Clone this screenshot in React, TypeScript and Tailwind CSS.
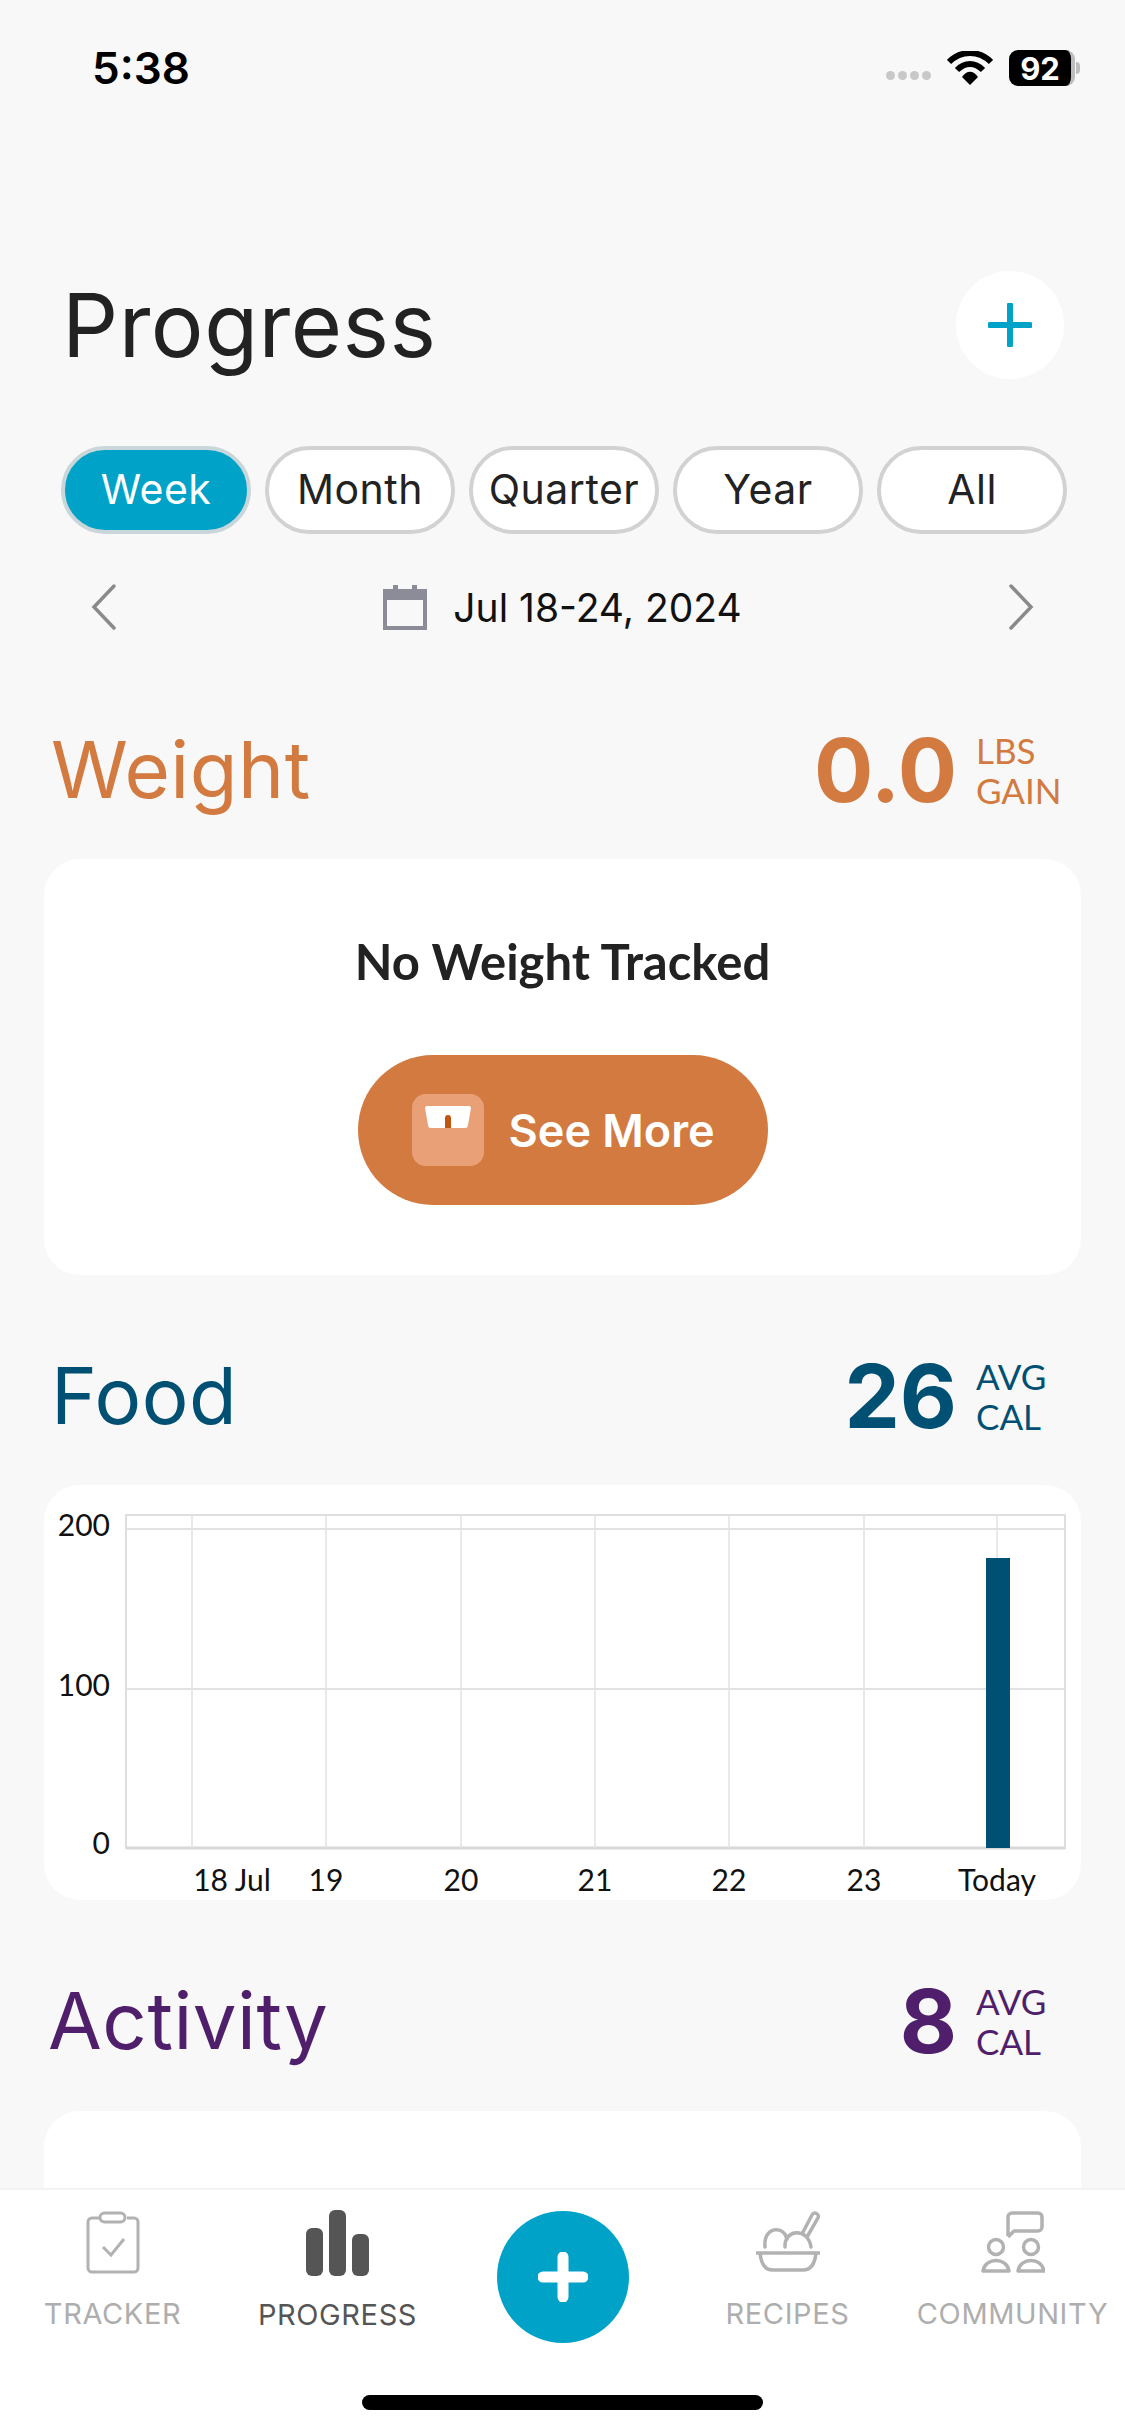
import React from "react";

function Pill({ label, active }: { label: string; active?: boolean }) {
  return (
    <div
      className={
        active
          ? "w-[190px] h-[88px] rounded-full border-[4px] border-[#c9d6da] bg-[#00a3c7] text-white flex items-center justify-center text-[41px] font-['Inter',sans-serif] tracking-[0.5px]"
          : "w-[190px] h-[88px] rounded-full border-[4px] border-[#d2d2d2] bg-white text-[#222222] flex items-center justify-center text-[41px] font-['Inter',sans-serif] tracking-[0.5px]"
      }
    >
      {label}
    </div>
  );
}

function Header({
  title,
  value,
  top,
  bottom,
  color,
  titleClass,
}: {
  title: string;
  value: string;
  top: string;
  bottom: string;
  color: string;
  titleClass: string;
}) {
  return (
    <div className={`h-[90px] flex items-center justify-between ${color} ${titleClass}`}>
      <div className="text-[78px] leading-none font-['Inter',sans-serif] tracking-[0.5px]">{title}</div>
      <div className="flex items-center pr-[4px]">
        <div className="text-[88px] leading-none font-bold font-['Inter',sans-serif]">{value}</div>
        <div className="ml-[19px] w-[84px] text-[35px] leading-[40px] font-['Lato',sans-serif]">
          <div>{top}</div>
          <div>{bottom}</div>
        </div>
      </div>
    </div>
  );
}

function Chart() {
  const xs = [192, 326, 461, 595, 729, 864, 997];
  const labels = ["18 Jul", "19", "20", "21", "22", "23", "Today"];
  const labelX = [232, 326, 461, 595, 729, 864, 997];
  const ox = 44;
  const oy = 1484;
  return (
    <svg width="1052" height="415" viewBox="0 0 1052 415" className="block">
      <rect x={126 - ox} y={1514 - oy} width={939} height={333} fill="none" stroke="#dedede" strokeWidth="2" />
      {[1528, 1688].map((y) => (
        <line key={y} x1={126 - ox} x2={1065 - ox} y1={y - oy} y2={y - oy} stroke="#e2e2e2" strokeWidth="2" />
      ))}
      <line x1={126 - ox} x2={1065 - ox} y1={1847 - oy} y2={1847 - oy} stroke="#d8d8d8" strokeWidth="3" />
      {xs.map((x) => (
        <line key={x} x1={x - ox} x2={x - ox} y1={1514 - oy} y2={1847 - oy} stroke="#e2e2e2" strokeWidth="1.5" />
      ))}
      <rect x={986 - ox} y={1557 - oy} width={24} height={290} fill="#005073" />
      {[
        ["200", 1525],
        ["100", 1685],
        ["0", 1843],
      ].map(([t, y]) => (
        <text
          key={t as string}
          x={110 - ox}
          y={(y as number) + 0 - oy + 10}
          textAnchor="end"
          fontSize="30"
          fontFamily="Lato, sans-serif"
          fill="#111111"
        >
          {t}
        </text>
      ))}
      {labels.map((t, i) => (
        <text
          key={t}
          x={labelX[i] - ox}
          y={1890 - oy}
          textAnchor="middle"
          fontSize="30"
          fontFamily="Lato, sans-serif"
          fill="#111111"
        >
          {t}
        </text>
      ))}
    </svg>
  );
}

function TabLabel({ children, dark }: { children: string; dark?: boolean }) {
  return (
    <div
      className={
        dark
          ? "mt-[24px] text-[29px] leading-[30px] font-['Inter',sans-serif] tracking-[0.6px] text-[#555555] whitespace-nowrap"
          : "mt-[24px] text-[29px] leading-[30px] font-['Inter',sans-serif] tracking-[0.6px] text-[#aeaeae] whitespace-nowrap"
      }
    >
      {children}
    </div>
  );
}

export default function App() {
  return (
    <div className="w-[1125px] h-[2436px] bg-[#f8f8f8] flex flex-col overflow-hidden">
      {/* status bar */}
      <div className="h-[136px] shrink-0 flex justify-between items-center pl-[92px] pr-[45px]">
        <div className="text-[44px] leading-none font-semibold font-['Inter',sans-serif] text-black">5:38</div>
        <div className="flex items-center">
          <div className="flex gap-[3px] mt-[14px] mr-[16px]">
            <span className="w-[9px] h-[9px] rounded-full bg-[#c8c8c8]" />
            <span className="w-[9px] h-[9px] rounded-full bg-[#c8c8c8]" />
            <span className="w-[9px] h-[9px] rounded-full bg-[#c8c8c8]" />
            <span className="w-[9px] h-[9px] rounded-full bg-[#c8c8c8]" />
          </div>
          <svg width="46" height="34" viewBox="0 0 46 34" className="mr-[16px]">
            <path d="M2 11 C14 -1 32 -1 44 11" fill="none" stroke="#000" strokeWidth="6" />
            <path d="M10 19 C18 11 28 11 36 19" fill="none" stroke="#000" strokeWidth="6" />
            <path d="M15 26 C20 19 26 19 31 26 L23 34 Z" fill="#000" />
          </svg>
          <div className="w-[66px] h-[36px] rounded-[9px] bg-black border-r-[4px] border-[#bdbdbd] text-white text-[31px] leading-none font-bold font-['Inter',sans-serif] flex items-center justify-center">
            92
          </div>
          <div className="w-[4px] h-[12px] rounded-r-full bg-[#bdbdbd] ml-[1px]" />
        </div>
      </div>

      {/* content */}
      <div className="flex-1 min-h-0 overflow-hidden">
        {/* title row */}
        <div className="mt-[134px] h-[109px] flex items-center justify-between pl-[62px] pr-[61px]">
          <div className="text-[88px] leading-none font-['Inter',sans-serif] text-[#222222] tracking-[0.5px]">Progress</div>
          <div className="w-[108px] h-[108px] rounded-full bg-white flex items-center justify-center">
            <svg width="44" height="44" viewBox="0 0 44 44">
              <path d="M22 2V42M2 22H42" stroke="#00a3c7" strokeWidth="6" strokeLinecap="round" />
            </svg>
          </div>
        </div>

        {/* pills */}
        <div className="mt-[67px] flex gap-[14px] pl-[61px]">
          <Pill label="Week" active />
          <Pill label="Month" />
          <Pill label="Quarter" />
          <Pill label="Year" />
          <Pill label="All" />
        </div>

        {/* date */}
        <div className="mt-[43px] h-[60px] flex items-center justify-between pl-[90px] pr-[90px]">
          <svg width="28" height="48" viewBox="0 0 28 48">
            <path d="M24 3L4 24L24 45" fill="none" stroke="#8a8a8a" strokeWidth="3.5" strokeLinecap="round" />
          </svg>
          <div className="flex items-center">
            <svg width="44" height="46" viewBox="0 0 44 46" className="mr-[26px]">
              <rect x="2" y="7" width="40" height="37" fill="none" stroke="#8c8c98" strokeWidth="4" />
              <rect x="2" y="7" width="40" height="9" fill="#8c8c98" />
              <rect x="10" y="1" width="5" height="10" fill="#8c8c98" />
              <rect x="29" y="1" width="5" height="10" fill="#8c8c98" />
            </svg>
            <div className="text-[39px] leading-none font-['Inter',sans-serif] text-[#111111]">Jul 18-24, 2024</div>
          </div>
          <svg width="28" height="48" viewBox="0 0 28 48">
            <path d="M4 3L24 24L4 45" fill="none" stroke="#8a8a8a" strokeWidth="3.5" strokeLinecap="round" />
          </svg>
        </div>

        <div className="px-[44px]">
          {/* weight */}
          <div className="mt-[88px] pl-[7px] pr-[17px]">
            <Header title="Weight" value="0.0" top="LBS" bottom="GAIN" color="text-[#d27a40]" titleClass="" />
          </div>
          <div className="mt-[44px] h-[416px] rounded-[36px] bg-white flex flex-col items-center">
            <div className="mt-[72px] text-[49px] leading-[60px] font-bold font-['Lato',sans-serif] text-[#222222]">
              No Weight Tracked
            </div>
            <div className="mt-[64px] w-[410px] h-[150px] rounded-full bg-[#d27a40] flex items-center pl-[54px]">
              <div className="w-[72px] h-[72px] rounded-[14px] bg-[#e9a077] flex justify-center pt-[12px]">
                <svg width="48" height="22" viewBox="0 0 48 22" className="block">
                  <path d="M3 0H45a2 2 0 0 1 2 2L44 19a3 3 0 0 1-3 3H7a3 3 0 0 1-3-3L1 2a2 2 0 0 1 2-2Z" fill="#ffffff" />
                  <path d="M21 22V12a3 3 0 0 1 6 0V22Z" fill="#bf5413" />
                </svg>
              </div>
              <div className="ml-[25px] text-[45px] leading-none font-semibold font-['Inter',sans-serif] text-white">See More</div>
            </div>
          </div>

          {/* food */}
          <div className="mt-[76px] pl-[7px] pr-[17px]">
            <Header title="Food" value="26" top="AVG" bottom="CAL" color="text-[#005073]" titleClass="" />
          </div>
          <div className="mt-[44px] h-[415px] rounded-[36px] bg-white overflow-hidden">
            <Chart />
          </div>

          {/* activity */}
          <div className="mt-[76px] pl-[4px] pr-[17px]">
            <Header title="Activity" value="8" top="AVG" bottom="CAL" color="text-[#4f1f6b]" titleClass="" />
          </div>
          <div className="mt-[45px] h-[300px] rounded-[36px] bg-white" />
        </div>
      </div>

      {/* tab bar */}
      <div className="h-[248px] shrink-0 bg-white border-t-[2px] border-[#f3f3f3] flex flex-col">
        <div className="h-[205px] grid grid-cols-[225px_225px_225px_225px_225px] pt-[21px]">
          <div className="flex flex-col items-center">
            <svg width="54" height="64" viewBox="0 0 54 64">
              <path d="M13 7H6a4 4 0 0 0-4 4V57a4 4 0 0 0 4 4H48a4 4 0 0 0 4-4V11a4 4 0 0 0-4-4H41" fill="none" stroke="#b2b2b2" strokeWidth="3" />
              <rect x="14" y="2" width="25" height="9" rx="4.5" fill="none" stroke="#b2b2b2" strokeWidth="3" />
              <path d="M17 36L25 44L38 28" fill="none" stroke="#b2b2b2" strokeWidth="3" />
            </svg>
            <TabLabel>TRACKER</TabLabel>
          </div>
          <div className="flex flex-col items-center">
            <svg width="64" height="66" viewBox="0 0 64 66" className="-mt-[1px]">
              <rect x="0" y="18" width="17" height="48" rx="6" fill="#555555" />
              <rect x="23" y="0" width="17" height="66" rx="6" fill="#555555" />
              <rect x="46" y="24" width="17" height="42" rx="6" fill="#555555" />
            </svg>
            <TabLabel dark>PROGRESS</TabLabel>
          </div>
          <div className="flex justify-center">
            <div className="w-[132px] h-[132px] rounded-full bg-[#00a3c7] flex items-center justify-center">
              <svg width="50" height="50" viewBox="0 0 50 50">
                <path d="M25 5V45M5 25H45" stroke="#ffffff" strokeWidth="11" strokeLinecap="round" />
              </svg>
            </div>
          </div>
          <div className="flex flex-col items-center">
            <svg width="64" height="64" viewBox="0 0 64 64">
              <path d="M1 42H63" stroke="#b2b2b2" strokeWidth="3.5" strokeLinecap="round" />
              <path d="M4 42C5 52 9 59 17 59H47C55 59 59 52 60 42" fill="none" stroke="#b2b2b2" strokeWidth="3.5" />
              <path d="M9 36C7 15 28 14 31 28" fill="none" stroke="#b2b2b2" strokeWidth="3.5" strokeLinecap="round" />
              <path d="M29 36C28 18 52 16 55 36" fill="none" stroke="#b2b2b2" strokeWidth="3.5" strokeLinecap="round" />
              <path d="M46 23L56 4C58 0 64 3 62 7L51 26" fill="none" stroke="#b2b2b2" strokeWidth="3.5" />
            </svg>
            <TabLabel>RECIPES</TabLabel>
          </div>
          <div className="flex flex-col items-center">
            <svg width="64" height="64" viewBox="0 0 64 64">
              <path d="M27 25V6a4 4 0 0 1 4-4H57a4 4 0 0 1 4 4V16a4 4 0 0 1-4 4H33L27 26" fill="none" stroke="#b2b2b2" strokeWidth="3.5" strokeLinejoin="round" />
              <circle cx="15" cy="36" r="7.5" fill="none" stroke="#b2b2b2" strokeWidth="3.5" />
              <circle cx="50" cy="36" r="7.5" fill="none" stroke="#b2b2b2" strokeWidth="3.5" />
              <path d="M2 60C4 46 26 46 28 60Z" fill="none" stroke="#b2b2b2" strokeWidth="3.5" strokeLinejoin="round" />
              <path d="M37 60C39 46 61 46 63 60Z" fill="none" stroke="#b2b2b2" strokeWidth="3.5" strokeLinejoin="round" />
            </svg>
            <TabLabel>COMMUNITY</TabLabel>
          </div>
        </div>
        <div className="flex justify-center">
          <div className="w-[401px] h-[15px] rounded-full bg-black" />
        </div>
      </div>
    </div>
  );
}
